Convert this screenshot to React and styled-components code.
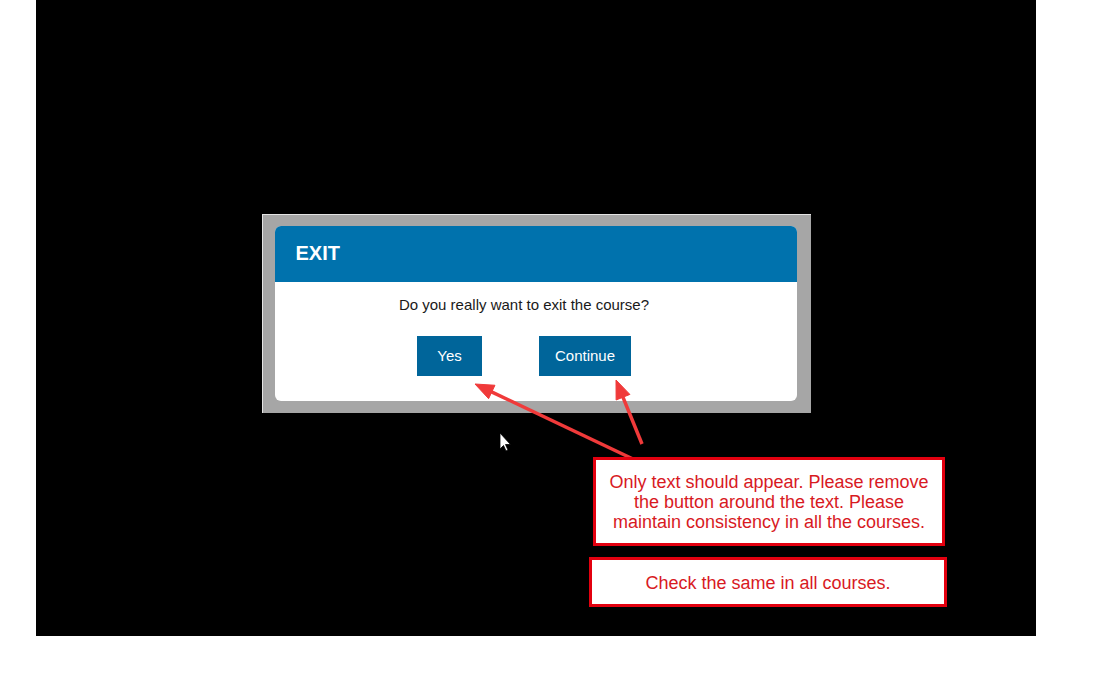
import React from 'react';
import styled, { createGlobalStyle } from 'styled-components';

const GlobalStyle = createGlobalStyle`
html, body {
  margin: 0;
  padding: 0;
  background: #ffffff;
}
body {
  width: 1120px;
  height: 674px;
  overflow: hidden;
  font-family: "Liberation Sans", Arial, sans-serif;
}
`

const Stage = styled.div`
position: relative;
width: 1000px;
height: 636px;
margin-left: 36px;

display: flex;
align-items: center;
justify-content: center;
padding-bottom: 9px;
box-sizing: border-box;

background-color: #000000;
`

const Frame = styled.div`
width: 549px;
height: 199px;
box-sizing: border-box;
padding: 11px 14px 12px 12px;

background-color: #a6a6a6;
border-top: 1px solid #e4e4e4;
border-left: 1px solid #e4e4e4;
`

const Card = styled.div`
height: 100%;
display: flex;
flex-direction: column;
overflow: hidden;

border-radius: 6px;
background-color: #ffffff;
`

const Header = styled.div`
height: 56px;
flex-shrink: 0;
display: flex;
align-items: center;
padding: 0 0 1px 21px;
box-sizing: border-box;

background-color: #0072ad;
`

const Title = styled.h2`
margin: 0;
font-size: 20px;
font-weight: 700;
color: #ffffff;
`

const Body = styled.div`
display: flex;
flex-direction: column;
align-items: center;
padding: 14px 23px 0 0;
`

const Question = styled.p`
margin: 0;
font-size: 15px;
line-height: 18px;
color: #1a1a1a;
`

const Actions = styled.div`
display: flex;
gap: 57px;
margin-top: 22px;
`

const DialogButton = styled.button`
width: ${(p) => p.w}px;
height: 40px;
border: none;
padding: 0 0 1px;

font-family: "Liberation Sans", Arial, sans-serif;
font-size: 15px;
color: #ffffff;
background-color: #00659a;
`

const Note = styled.div`
position: absolute;
left: ${(p) => p.x}px;
top: ${(p) => p.y}px;
width: ${(p) => p.w}px;
height: ${(p) => p.h}px;
box-sizing: border-box;

display: flex;
align-items: center;
justify-content: center;
text-align: center;
padding-top: ${(p) => p.shift || 0}px;

border: 3px solid #e3000f;
background-color: #ffffff;

font-size: 18px;
line-height: 20px;
color: #d81a1f;
`

const Overlay = styled.svg`
position: absolute;
left: 0;
top: 0;
pointer-events: none;
`

const Arrow = ({ x1, y1, x2, y2 }) => {
  const a = Math.atan2(y2 - y1, x2 - x1);
  const len = 20;
  const spread = 0.38;
  const p1 = [x2 - len * Math.cos(a - spread), y2 - len * Math.sin(a - spread)];
  const p2 = [x2 - len * Math.cos(a + spread), y2 - len * Math.sin(a + spread)];
  const bx = x2 - (len - 4) * Math.cos(a);
  const by = y2 - (len - 4) * Math.sin(a);
  return (
    <g fill="#f03a3a" stroke="#f03a3a">
      <line x1={x1} y1={y1} x2={bx} y2={by} strokeWidth="3.5" />
      <polygon points={`${x2},${y2} ${p1[0]},${p1[1]} ${p2[0]},${p2[1]}`} strokeWidth="1" />
    </g>
  );
};

const App = () => {
  return (
    <>
      <GlobalStyle />
      <Stage>
        <Frame>
          <Card>
            <Header>
              <Title>EXIT</Title>
            </Header>
            <Body>
              <Question>Do you really want to exit the course?</Question>
              <Actions>
                <DialogButton w={65}>Yes</DialogButton>
                <DialogButton w={92}>Continue</DialogButton>
              </Actions>
            </Body>
          </Card>
        </Frame>

        <Overlay width="1000" height="636" viewBox="0 0 1000 636">
          <Arrow x1={597} y1={459} x2={439} y2={384} />
          <Arrow x1={606} y1={444} x2={580} y2={380} />
          <path
            d="M464 433 L464 449 L467.5 445.5 L470 451 L472 450 L469.5 444.5 L474.5 444.5 Z"
            fill="#ffffff"
            stroke="#000000"
            strokeWidth="0.8"
          />
        </Overlay>

        <Note x={557} y={457} w={352} h={89}>
          Only text should appear. Please remove<br />
          the button around the text. Please<br />
          maintain consistency in all the courses.
        </Note>
        <Note x={553} y={557} w={358} h={50} shift={2}>
          Check the same in all courses.
        </Note>
      </Stage>
    </>
  );
};

export default App;
